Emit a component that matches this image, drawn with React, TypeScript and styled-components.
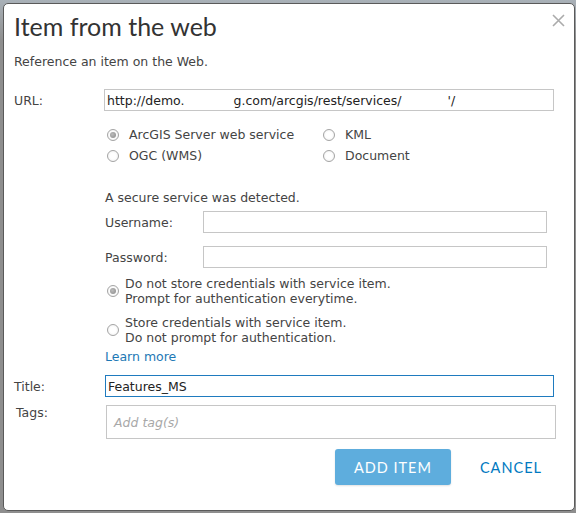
import React, { useState } from "react";
import styled, { createGlobalStyle } from "styled-components";

const GlobalStyle = createGlobalStyle`
html, body {
  margin: 0;
  padding: 0;
  background: #8e8e8e;
}
#root {
  width: 576px;
  height: 513px;
}
`;

const Backdrop = styled.div`
  box-sizing: border-box;
  width: 576px;
  height: 513px;
  padding: 3px 3px 2px 3px;
  display: flex;
  background: linear-gradient(#a9b1b8, #8e8e8e 8%, #8e8e8e);
`;

const Dialog = styled.div`
  flex: 1;
  display: flex;
  flex-direction: column;
  background: #fff;
  border: 1px solid #5a5a5a;
  border-radius: 5px;
  padding: 0 18px 0 10px;
  font-family: "DejaVu Sans", Verdana, sans-serif;
  font-size: 12.5px;
  color: #444;
`;

const Header = styled.div`
  display: flex;
  justify-content: space-between;
  align-items: flex-start;
  padding-top: 7px;
`;

const Title = styled.h1`
  margin: 0;
  font-family: Lato, "Open Sans", sans-serif;
  font-weight: 400;
  font-size: 25px;
  line-height: 31px;
  color: #333;
`;

const CloseButton = styled.button`
  margin: 3px -9px 0 0;
  padding: 0;
  border: 0;
  background: none;
  width: 13px;
  height: 13px;
  display: flex;
  cursor: pointer;
`;

const Text = styled.div<{ $top?: number }>`
  margin-top: ${(p) => p.$top ?? 0}px;
  line-height: 16px;
`;

const Row = styled.div<{ $top: number; $align?: string }>`
  display: flex;
  align-items: ${(p) => p.$align ?? "center"};
  margin-top: ${(p) => p.$top}px;
`;

const Label = styled.label<{ $width: number; $shift?: number }>`
  width: ${(p) => p.$width}px;
  flex: none;
  padding-left: ${(p) => p.$shift ?? 0}px;
  box-sizing: border-box;
`;

const TextBox = styled.div<{ $width: number; $height?: number; $focus?: boolean }>`
  box-sizing: border-box;
  width: ${(p) => p.$width}px;
  height: ${(p) => p.$height ?? 22}px;
  border: 1px solid ${(p) => (p.$focus ? "#1f7bbf" : "#c6c6c6")};
  background: #fff;
  display: flex;
  align-items: center;
  padding-left: 2px;
  white-space: nowrap;
  overflow: hidden;
  color: #222;
`;

const Blank = styled.span<{ $w: number }>`
  display: inline-block;
  width: ${(p) => p.$w}px;
  height: 22px;
  background: #fff;
`;

const Placeholder = styled.span`
  font-style: italic;
  color: #a8a8a8;
  padding-left: 5px;
`;

const RadioGrid = styled.div`
  display: grid;
  grid-template-columns: 216px auto;
  grid-auto-rows: 21px;
  margin: 13px 0 0 93px;
`;

const Option = styled.label`
  display: flex;
  align-items: center;
  gap: 10px;
`;

const Radio = styled.span<{ $checked?: boolean }>`
  box-sizing: border-box;
  width: 12px;
  height: 12px;
  flex: none;
  border-radius: 50%;
  border: 1px solid #a4a4a4;
  background: radial-gradient(circle, #fff 40%, #ececec);
  display: flex;
  align-items: center;
  justify-content: center;
  &::after {
    content: "";
    width: 6px;
    height: 6px;
    border-radius: 50%;
    background: ${(p) => (p.$checked ? "radial-gradient(circle at 40% 40%, #bbb, #8a8a8a)" : "transparent")};
  }
`;

const Secure = styled.div`
  margin: 24px 0 0 91px;
  display: flex;
  flex-direction: column;
`;

const Choice = styled.label<{ $top: number }>`
  display: flex;
  align-items: center;
  gap: 6px;
  margin: ${(p) => p.$top}px 0 0 2px;
  line-height: 14.5px;
  & > span:first-child {
    margin-top: -2px;
  }
`;

const Link = styled.a`
  color: #1d78b5;
  text-decoration: none;
  line-height: 16px;
  margin-top: 4px;
  cursor: pointer;
`;

const Footer = styled.div`
  display: flex;
  justify-content: flex-end;
  align-items: center;
  margin-top: 10px;
  padding-right: 14px;
  gap: 29px;
`;

const PrimaryButton = styled.button`
  width: 116px;
  height: 36px;
  border: 0;
  border-radius: 3px;
  background: #5eaddd;
  color: #fff;
  font-family: Lato, "Open Sans", sans-serif;
  font-size: 14.5px;
  letter-spacing: 1px;
  box-shadow: 0 1px 2px rgba(0, 0, 0, 0.12);
  cursor: pointer;
`;

const LinkButton = styled.button`
  border: 0;
  padding: 0;
  background: none;
  color: #0079c1;
  font-family: Lato, "Open Sans", sans-serif;
  font-size: 14.5px;
  letter-spacing: 1px;
  cursor: pointer;
`;

const CloseIcon = () => (
  <svg width="13" height="13" viewBox="0 0 13 13">
    <path d="M1 1 L12 12 M12 1 L1 12" stroke="#ababab" strokeWidth="1.6" fill="none" />
  </svg>
);

const App = () => {
  const [source, setSource] = useState("arcgis");
  const [store, setStore] = useState(false);

  const sources = [
    { id: "arcgis", text: "ArcGIS Server web service" },
    { id: "kml", text: "KML" },
    { id: "ogc", text: "OGC (WMS)" },
    { id: "doc", text: "Document" },
  ];

  return (
    <>
      <GlobalStyle />
      <Backdrop>
        <Dialog>
          <Header>
            <Title>Item from the web</Title>
            <CloseButton aria-label="close">
              <CloseIcon />
            </CloseButton>
          </Header>

          <Text $top={12}>Reference an item on the Web.</Text>

          <Row $top={19}>
            <Label $width={90}>URL:</Label>
            <TextBox $width={450}>
              http://demo.<Blank $w={49} />g.com/arcgis/rest/services/<Blank $w={46} />'/
            </TextBox>
          </Row>

          <RadioGrid>
            {sources.map((s) => (
              <Option key={s.id} onClick={() => setSource(s.id)}>
                <Radio $checked={source === s.id} />
                {s.text}
              </Option>
            ))}
          </RadioGrid>

          <Secure>
            <Text>A secure service was detected.</Text>
            <Row $top={5}>
              <Label $width={98}>Username:</Label>
              <TextBox $width={344} />
            </Row>
            <Row $top={13}>
              <Label $width={98}>Password:</Label>
              <TextBox $width={344} />
            </Row>
            <Choice $top={9} onClick={() => setStore(false)}>
              <Radio $checked={!store} />
              <span>
                Do not store credentials with service item.
                <br />
                Prompt for authentication everytime.
              </span>
            </Choice>
            <Choice $top={10} onClick={() => setStore(true)}>
              <Radio $checked={store} />
              <span>
                Store credentials with service item.
                <br />
                Do not prompt for authentication.
              </span>
            </Choice>
            <Link>Learn more</Link>
          </Secure>

          <Row $top={10}>
            <Label $width={91}>Title:</Label>
            <TextBox $width={449} $focus>
              Features_MS
            </TextBox>
          </Row>

          <Row $top={8} $align="flex-start">
            <Label $width={92} $shift={2}>
              Tags:
            </Label>
            <TextBox $width={450} $height={34}>
              <Placeholder>Add tag(s)</Placeholder>
            </TextBox>
          </Row>

          <Footer>
            <PrimaryButton>ADD ITEM</PrimaryButton>
            <LinkButton>CANCEL</LinkButton>
          </Footer>
        </Dialog>
      </Backdrop>
    </>
  );
};

export default App;
